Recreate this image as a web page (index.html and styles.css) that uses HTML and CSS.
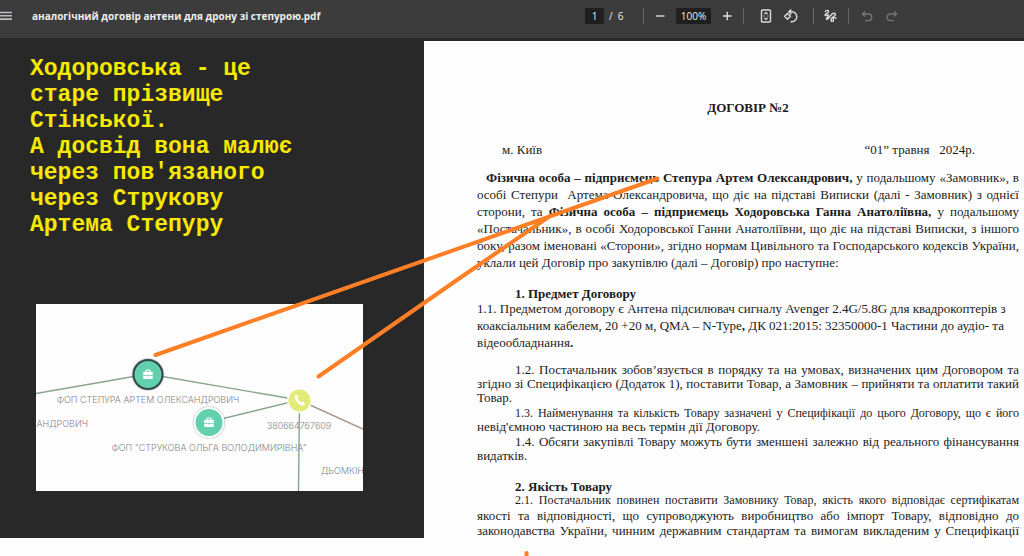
FILE: index.html
```html
<!DOCTYPE html>
<html lang="uk">
<head>
<meta charset="utf-8">
<meta name="viewport" content="width=device-width, initial-scale=1">
<title>аналогічний договір антени для дрону зі степурою.pdf</title>
<link rel="stylesheet" href="styles.css">
</head>
<body>
<div class="viewer">
  <header class="toolbar">
    <div class="toolbar-start">
      <button class="tool menu" aria-label="Меню">
        <svg width="12" height="10" viewBox="0 0 12 10"><path d="M0 1.500h12M0 4.800h12M0 8.100h12" stroke="#bdbcc2" stroke-width="1.600"/></svg>
      </button>
      <h1 class="file-name">аналогічний договір антени для дрону зі степурою.pdf</h1>
    </div>
    <div class="toolbar-tools">
      <div class="pager">
        <input class="field page-field" type="text" value="1" aria-label="Сторінка">
        <span>/</span><span>6</span>
      </div>
      <span class="divider"></span>
      <button class="tool" aria-label="Зменшити">
        <svg width="16" height="16" viewBox="0 0 16 16"><path d="M4 8h8.500" /></svg>
      </button>
      <input class="field zoom-field" type="text" value="100%" aria-label="Масштаб">
      <button class="tool" aria-label="Збільшити">
        <svg width="16" height="16" viewBox="0 0 16 16"><path d="M4 8h8.500M8.200 3.800v8.400"/></svg>
      </button>
      <span class="divider"></span>
      <button class="tool tool-fit" aria-label="За розміром сторінки">
        <svg width="16" height="16" viewBox="0 0 16 16"><rect x="3.500" y="2" width="9" height="12" rx="1"/><path d="M6.300 5.700 8 4l1.700 1.700zM6.300 10.300 8 12l1.700-1.700zM5.500 8h1.200M9.300 8h1.200" stroke-width=".9"/></svg>
      </button>
      <button class="tool tool-rotate" aria-label="Повернути">
        <svg width="16" height="16" viewBox="0 0 16 16"><path d="M4.500 5.400 7.400 8.300 4.500 11.200 1.600 8.300zM8.300 1.400 5.800 3.800 8.300 6.200M6 3.800h2.800a5 5 0 0 1 0 10H7.500" stroke-width="1.400"/></svg>
      </button>
      <span class="divider"></span>
      <button class="tool tool-draw" aria-label="Малювати">
        <svg width="16" height="16" viewBox="0 0 16 16"><path d="M3 4c1-2 4-2.200 3.500-.3C6 5.500 2.500 6 3 7.200c.5 1 3-.9 3.600 0 .6 1-3.100 2.800-2.100 4.100 1.200 1 4-4.300 6-5.600 2-1.200 3.500 0 2.700 1.500-.9 1.500-3.800 2.300-4.200 4.300-.3 2 1.800 2.500 2.300 1.200.5-1.500-.8-2.800.8-3.300 1.400-.3 1 1.400 2.400.8"/></svg>
      </button>
      <span class="divider"></span>
      <button class="tool tool-undo" aria-label="Скасувати" disabled>
        <svg width="16" height="16" viewBox="0 0 16 16"><path d="M6 3.500 3.500 6 6 8.500M3.800 6h5.700a3.300 3.300 0 0 1 0 6.600H6"/></svg>
      </button>
      <button class="tool tool-redo" aria-label="Повторити" disabled>
        <svg width="16" height="16" viewBox="0 0 16 16"><path d="M10 3.500 12.500 6 10 8.500M12.200 6H6.500a3.300 3.300 0 0 0 0 6.600H10"/></svg>
      </button>
    </div>
  </header>

  <main class="workspace">
    <section class="side">
      <p class="note">Ходоровська - це<br>старе прізвище<br>Стінської.<br>А досвід вона малює<br>через пов'язаного<br>через Струкову<br>Артема Степуру</p>
      <svg class="graph" viewBox="0 0 327 187" role="img" aria-label="Схема зв'язків">
        <defs>
          <g id="case">
            <path d="M-2-2.500v-1.300q0-.7.700-.7h2.600q.7 0 .7.700v1.300" fill="none" stroke="#fff" stroke-width="1.100"/>
            <rect x="-4.800" y="-2.700" width="9.600" height="7.200" rx=".8" fill="#fff"/>
            <path d="M-4.800 1h3.600M1.200 1h3.600" stroke="#62d0ad" stroke-width=".8"/>
            <rect x="-.8" y=".2" width="1.600" height="1.600" fill="#62d0ad"/>
          </g>
        </defs>
        <g class="edges">
          <path d="M0 89.500 112 70M112 70 263 96M263 96 173 118M263.500 96 262.500 187"/>
          <path class="edge-warm" d="M263 96 327 125"/>
        </g>
        <circle cx="263.500" cy="96.500" r="12.500" fill="#fdfdfd"/>
        <circle cx="263.500" cy="96.500" r="11" fill="#e2ea78"/>
        <path d="M259 91.500q1-1.400 2.200-.2l1.200 1.800q.4.900-.8 1.700.8 2.200 3 3.400 1.200-1.200 2-.6l1.900 1.400q.9 1-.4 1.900-2.400 1.900-6.100-1.700-4.200-4.300-3-7.700z" fill="#fff"/>
        <circle class="node-shadow" cx="112" cy="70.500" r="15"/>
        <circle cx="112" cy="70.500" r="14.500" fill="#62d0ad" stroke="#35474e" stroke-width="2"/>
        <use href="#case" x="112" y="70.500"/>
        <circle class="node-shadow" cx="173" cy="118.500" r="15"/>
        <circle cx="173" cy="118.500" r="14.500" fill="#62d0ad" stroke="#fff" stroke-width="2"/>
        <use href="#case" x="173" y="118.500"/>
        <g class="labels">
          <text x="112" y="99" text-anchor="middle">ФОП СТЕПУРА АРТЕМ ОЛЕКСАНДРОВИЧ</text>
          <text x="52" y="123" text-anchor="end">АНДРОВИЧ</text>
          <text x="263" y="125" text-anchor="middle">380664767609</text>
          <text x="173" y="147" text-anchor="middle">ФОП "СТРУКОВА ОЛЬГА ВОЛОДИМИРІВНА"</text>
          <text x="285" y="170">ДЬОМКІН</text>
        </g>
      </svg>
    </section>

    <article class="page">
      <h2 class="doc-title">ДОГОВІР №2</h2>
      <div class="place-date"><span>м. Київ</span><span>“01” травня &nbsp; 2024р.</span></div>
      <p class="intro"><b>Фізична особа – підприємець Степура Артем Олександрович,</b> у подальшому «Замовник», в особі Степури &nbsp;Артема Олександровича, що діє на підставі Виписки (далі - Замовник) з однієї сторони, та <b>Фізична особа – підприємець Ходоровська Ганна Анатоліївна,</b> у подальшому «Постачальник», в особі Ходоровської Ганни Анатоліївни, що діє на підставі Виписки, з іншого боку, разом іменовані «Сторони», згідно нормам Цивільного та Господарського кодексів України, уклали цей Договір про закупівлю (далі – Договір) про наступне:</p>
      <h3 class="heading">1. Предмет Договору</h3>
      <p class="subject">1.1. Предметом договору є Антена підсилювач сигналу Avenger 2.4G/5.8G для квадрокоптерів з коаксіальним кабелем, 20 +20 м, QMA – N-Type<b>,</b> ДК 021:2015: 32350000-1 Частини до аудіо- та відеообладнання<b>.</b></p>
      <p class="clause"><span class="lead">1.2. Постачальник зобов’язується в порядку та на умовах, визначених цим Договором та</span> згідно зі Специфікацією (Додаток 1), поставити Товар, а Замовник – прийняти та оплатити такий Товар.</p>
      <p class="clause"><span class="lead lead-tight">1.3. Найменування та кількість Товару зазначені у Специфікації до цього Договору, що є його</span> невід'ємною частиною на весь термін дії Договору.</p>
      <p class="clause"><span class="lead">1.4. Обсяги закупівлі Товару можуть бути зменшені залежно від реального фінансування</span> видатків.</p>
      <h3 class="heading">2. Якість Товару</h3>
      <p class="quality"><span class="lead lead-tight">2.1. Постачальник повинен поставити Замовнику Товар, якість якого відповідає сертифікатам</span> якості та відповідності, що супроводжують виробництво або імпорт Товару, відповідно до законодавства України, чинним державним стандартам та вимогам викладеним у Специфікації</p>
    </article>
  </main>
  <svg class="marks" width="1024" height="556" viewBox="0 0 1024 556" aria-hidden="true">
    <path d="M155.500 355 657.500 178.500M318.500 376.500 457 280 550 216M526.500 553v6"/>
  </svg>
</div>
</body>
</html>
```
FILE: styles.css
```css
* {
  box-sizing: border-box;
}

body {
  margin: 0;
  background: #fdfdfd;
  color: #1c1c1c;
}

h1, h2, h3, p {
  margin: 0;
}

.viewer {
  position: relative;
  min-height: 100vh;
  overflow: hidden;
}

.toolbar {
  display: grid;
  grid-template-columns: 585px 1fr;
  align-items: center;
  height: 38px;
  padding-bottom: 6px;
  background: #3c3c3c;
  color: #eeeeee;
  font-family: "Open Sans", "Noto Sans", sans-serif;
}

.toolbar-start,
.toolbar-tools,
.pager {
  display: flex;
  align-items: center;
}

.toolbar-start {
  gap: 20px;
}

.file-name {
  font-size: 10px;
  line-height: 16px;
  font-weight: 700;
  white-space: nowrap;
}

.tool {
  display: flex;
  flex: none;
  padding: 0;
  border: 0;
  background: none;
}

.tool svg {
  fill: none;
  stroke: #dddbdd;
  stroke-width: 1.4;
}

.tool:disabled svg {
  stroke: #77737a;
}

.pager {
  gap: 5px;
  width: 40px;
  font-size: 10px;
}

.field {
  height: 16px;
  padding: 0;
  border: 0;
  background: #1f1f1f;
  color: #eeeeee;
  font: 10px/16px "Open Sans", "Noto Sans", sans-serif;
  text-align: center;
}

.page-field {
  width: 19px;
}

.zoom-field {
  width: 35px;
  margin: 0 8px;
}

.divider {
  width: 1px;
  height: 16px;
  margin: 0 8px;
  background: #69666a;
}

.pager + .divider {
  margin-left: 18px;
}

.tool-fit {
  margin-left: 6px;
}

.tool-rotate {
  margin: 0 6px 0 9px;
}

.tool-draw {
  margin-right: 2px;
}

.tool-undo {
  margin: 0 9px 0 2px;
}

.workspace {
  display: grid;
  grid-template-columns: 424px minmax(0, 1fr);
  background: #282828;
}

.side {
  padding: 18px 30px 46px;
}

.note {
  color: #f6e800;
  font: bold 23px/26px "Liberation Mono", monospace;
}

.graph {
  display: block;
  width: 327px;
  margin: 66px 0 0 6px;
  background: #fdfdfd;
}

.edges {
  fill: none;
  stroke: #87a68c;
  stroke-width: 1.4;
}

.edge-warm {
  stroke: #a8988e;
}

.node-shadow {
  fill: #fff;
  filter: drop-shadow(0 0 1px #555);
}

.labels {
  fill: #858585;
  font: 300 9px "Inter", sans-serif;
}

.page {
  margin-top: 3px;
  padding: 58px 5px 0 53px;
  background: #fdfdfd;
  font-family: "Liberation Serif", serif;
  font-size: 13px;
  line-height: 17px;
}

.doc-title {
  font-size: 13px;
  text-align: center;
}

.place-date {
  display: flex;
  justify-content: space-between;
  margin: 25px 44px 11px 25px;
}

.intro {
  text-align: justify;
  text-indent: 9px;
}

.heading {
  margin-left: 38px;
  font-size: 13px;
  line-height: 12px;
}

.intro + .heading {
  margin-top: 17px;
}

.subject {
  margin-bottom: 12px;
}

.clause,
.quality {
  text-align: justify;
}

.lead {
  display: block;
  text-align-last: justify;
  text-indent: 38px;
  white-space: nowrap;
}

.lead-tight {
  font-size: 12px;
}

.clause {
  margin-bottom: 1px;
  line-height: 14px;
}

.clause + .heading {
  margin-top: 18px;
}

.quality {
  line-height: 15px;
  text-align-last: justify;
}

.marks {
  position: absolute;
  top: 0;
  left: 0;
  fill: none;
  stroke: #ff7f27;
  stroke-width: 4;
  stroke-linecap: round;
}
```
